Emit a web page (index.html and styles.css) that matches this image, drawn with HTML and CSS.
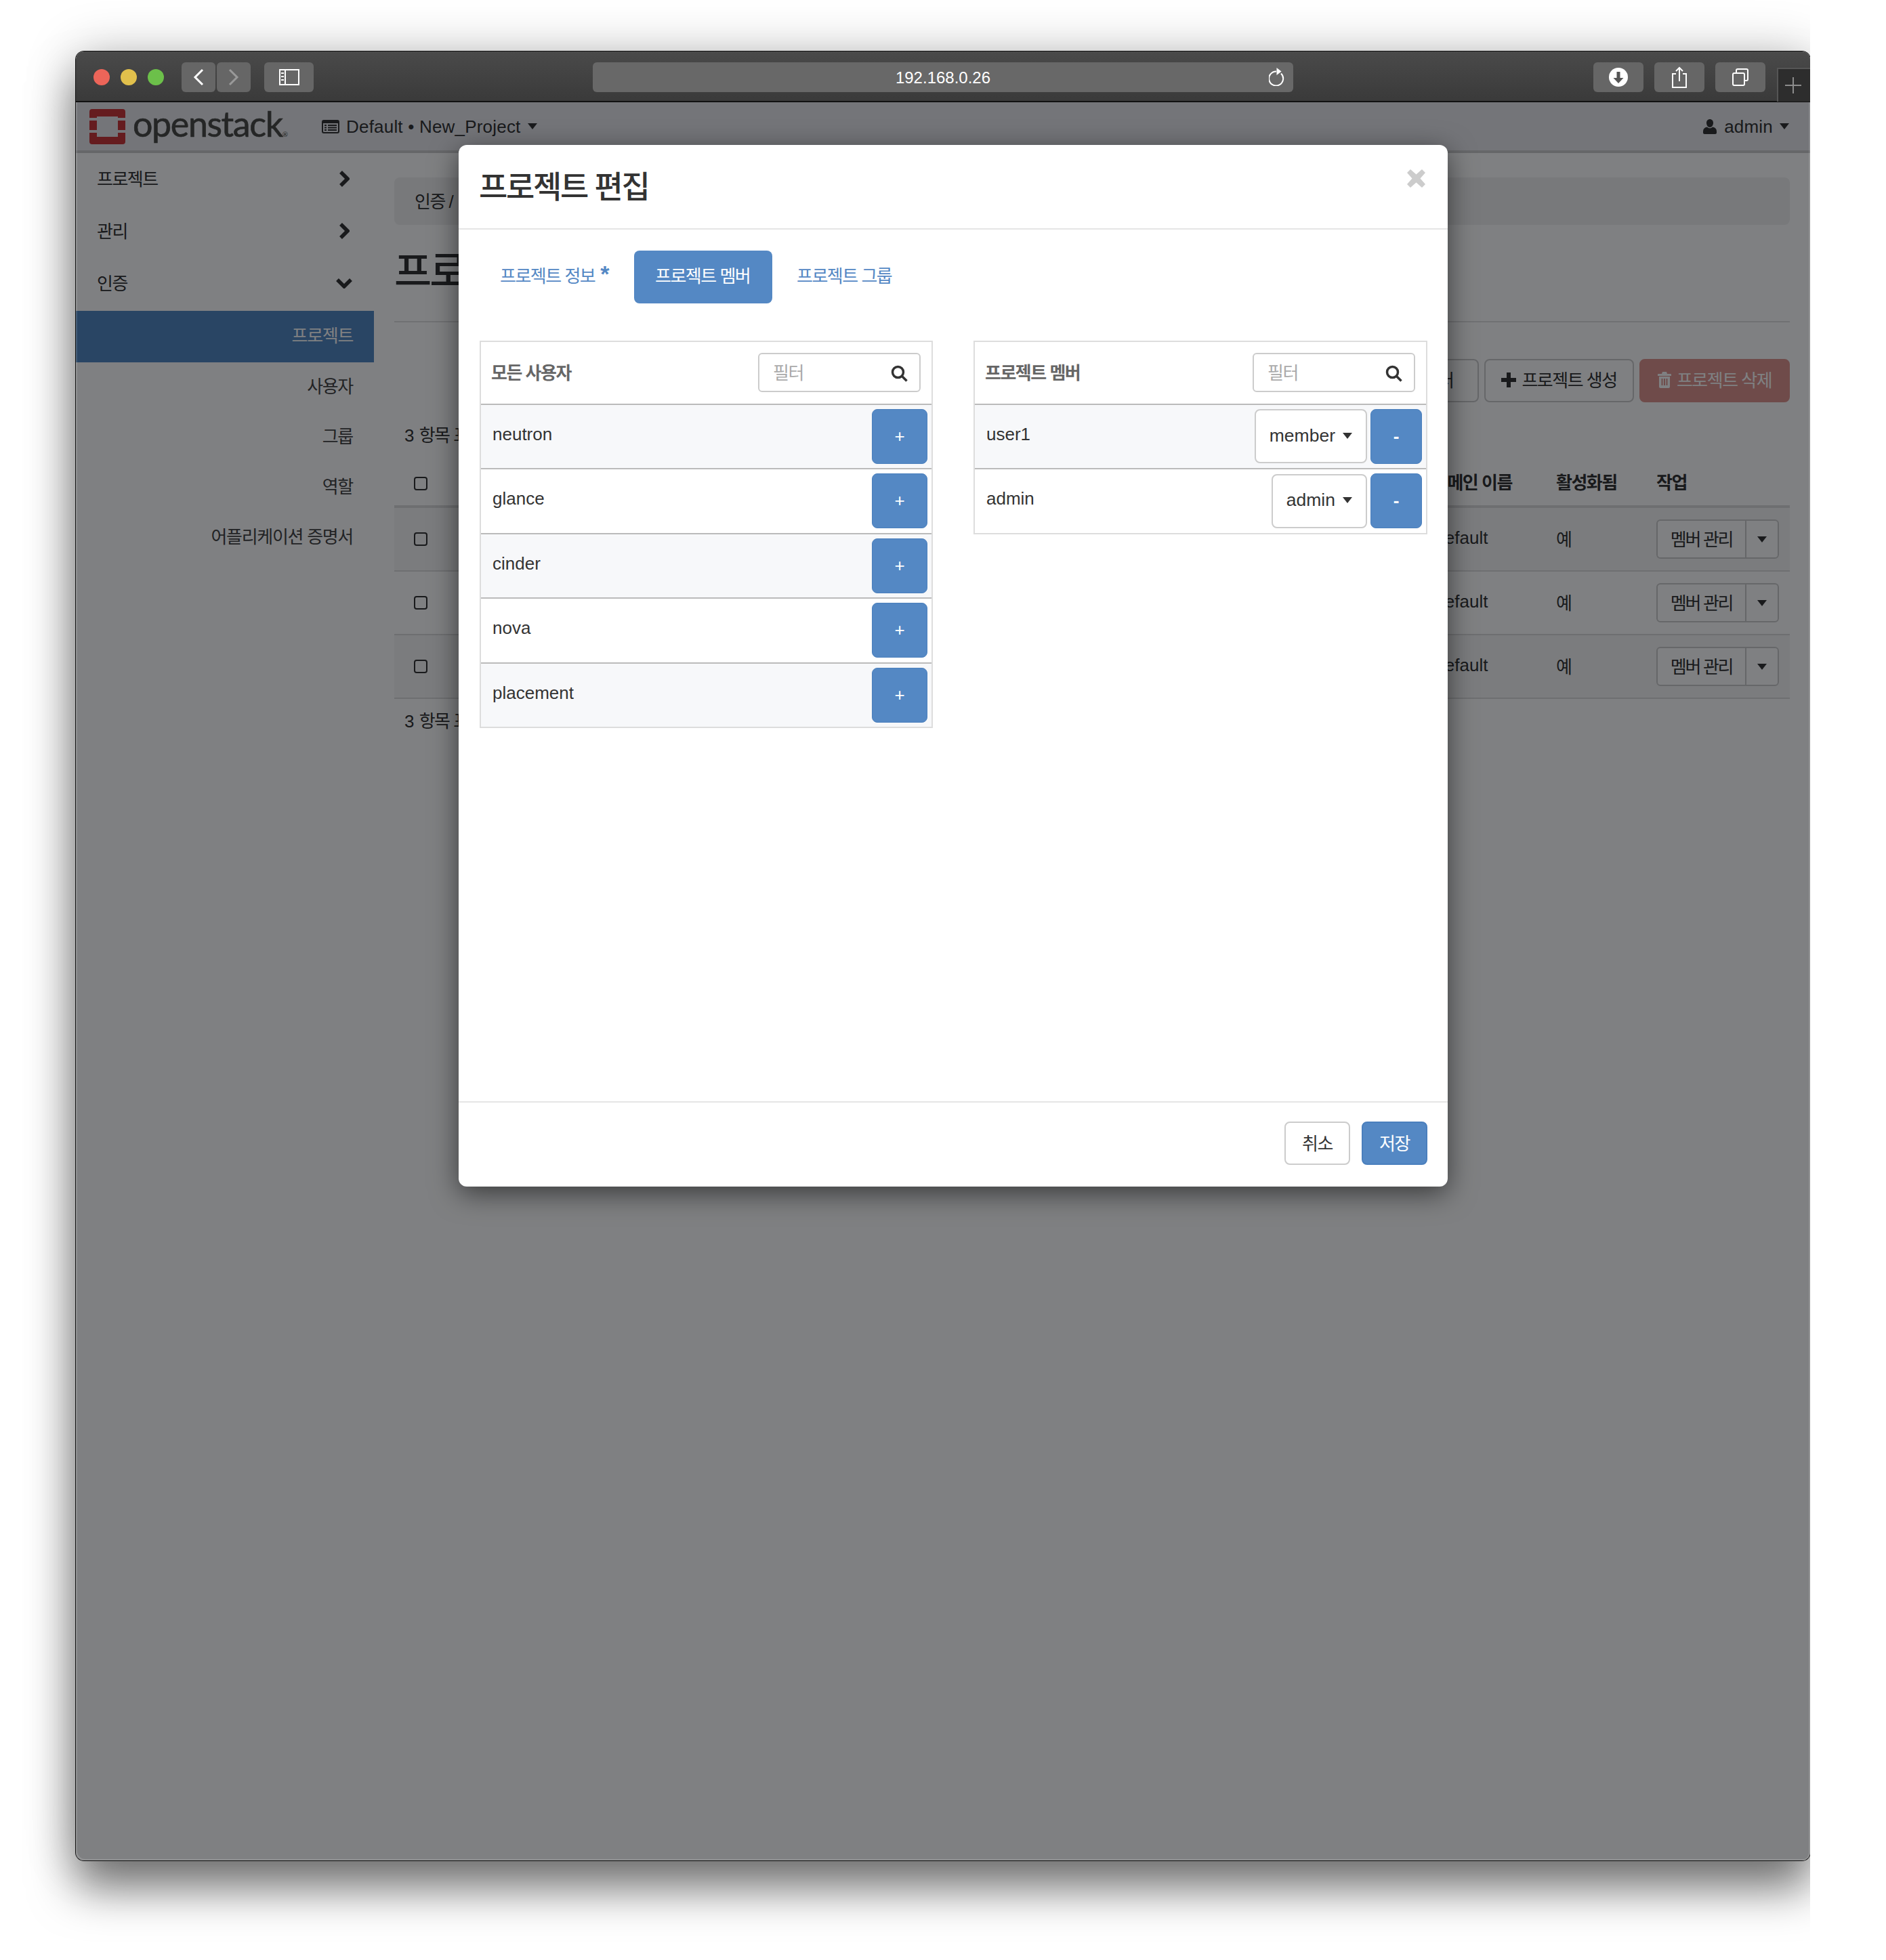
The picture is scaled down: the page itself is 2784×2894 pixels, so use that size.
FILE: index.html
```html
<!DOCTYPE html>
<html lang="ko">
<head>
<meta charset="utf-8">
<title>프로젝트 편집</title>
<link rel="stylesheet" href="styles.css">
</head>
<body>
<div class="stage">
<div class="window">
  <header class="titlebar">
    <div class="lights"><i class="light red"></i><i class="light yellow"></i><i class="light green"></i></div>
    <div class="tb-btn nav-btn first"><svg width="16" height="26" viewBox="0 0 16 26"><path class="st-white" d="M14 2 3 13l11 11"/></svg></div>
    <div class="tb-btn nav-btn second"><svg width="16" height="26" viewBox="0 0 16 26"><path class="st-dim" d="m2 2 11 11L2 24"/></svg></div>
    <div class="tb-btn side-btn"><svg width="30" height="24" viewBox="0 0 30 24"><path class="st-white thin" d="M1 1h28v22H1zM9 1v22"/><path class="st-white thin" d="M3 6h4M3 11h4M3 16h4"/></svg></div>
    <div class="urlbar"><span class="url">192.168.0.26</span><svg class="reload" width="24" height="28" viewBox="0 0 24 28"><path class="st-white thin" d="M18 9.500a10.500 10.500 0 1 1-7-3"/><path class="fill-white" d="M11.500 1l7 5.500-7 5.500z"/></svg></div>
    <div class="tb-btn icon-btn dl"><svg width="28" height="28" viewBox="0 0 28 28"><circle class="fill-white" cx="14" cy="14" r="14"/><path class="fill-dark" d="M11.500 6h5v9h5L14 23l-7.500-8h5z"/></svg></div>
    <div class="tb-btn icon-btn"><svg width="24" height="32" viewBox="0 0 24 32"><path class="st-white thin" d="M7 11H2v20h20V11h-5M12 22V2M7 7l5-5 5 5"/></svg></div>
    <div class="tb-btn icon-btn"><svg width="26" height="26" viewBox="0 0 26 26"><path class="st-white thin" d="M7 6V3a2 2 0 0 1 2-2h13a2 2 0 0 1 2 2v13a2 2 0 0 1-2 2h-2"/><rect class="st-white thin" x="2" y="7" width="17" height="18" rx="2"/></svg></div>
    <div class="newtab"><svg width="24" height="24" viewBox="0 0 24 24"><path class="st-plus" d="M12 0v24M0 12h24"/></svg></div>
  </header>

  <div class="app">
    <nav class="navbar">
      <svg class="logo" width="53" height="52" viewBox="0 0 53 52"><path class="fill-logo" d="M4 0h45a4 4 0 0 1 4 4v9H42v-2H11v2H0V4a4 4 0 0 1 4-4zM0 17h11v14H0zM42 17h11v14H42zM0 35h11v6h31v-6h11v13a4 4 0 0 1-4 4H4a4 4 0 0 1-4-4z"/></svg>
      <span class="brand">openstack<small class="reg">®</small></span>
      <svg class="domain-icon" width="26" height="20" viewBox="0 0 26 20"><path class="fill-text" fill-rule="evenodd" d="M3 0h20a3 3 0 0 1 3 3v14a3 3 0 0 1-3 3H3a3 3 0 0 1-3-3V3a3 3 0 0 1 3-3zM2 5v12a1 1 0 0 0 1 1h20a1 1 0 0 0 1-1V5zM4 7h3v2H4zM9 7h13v2H9zM4 10.500h3v2H4zM9 10.500h13v2H9zM4 14h3v2H4zM9 14h13v2H9z"/></svg>
      <span class="nav-text">Default • New_Project</span><i class="caret nav-caret"></i>
      <div class="nav-user">
        <svg width="22" height="22" viewBox="0 0 22 22"><path class="fill-text" d="M11 0c3 0 5 2.300 5 5.500S14 12 11 12 6 8.700 6 5.500 8 0 11 0zM7 11.500c1 1.200 2.500 1.800 4 1.800s3-.6 4-1.800c4 .7 6 3 6 6.500v2c0 1.200-1 2-2 2H3c-1 0-2-.8-2-2v-2c0-3.500 2-5.800 6-6.500z"/></svg>
        <span class="nav-text">admin</span><i class="caret nav-caret"></i>
      </div>
    </nav>

    <div class="layout">
      <aside class="sidebar">
        <div class="side-item"><span class="ko">프로젝트</span><svg width="16" height="26" viewBox="0 0 16 26"><path class="st-chev" d="m3 3 10 10L3 23"/></svg></div>
        <div class="side-item"><span class="ko">관리</span><svg width="16" height="26" viewBox="0 0 16 26"><path class="st-chev" d="m3 3 10 10L3 23"/></svg></div>
        <div class="side-item open"><span class="ko">인증</span><svg width="24" height="16" viewBox="0 0 24 16"><path class="st-chev" d="m2 3 10 10L22 3"/></svg></div>
        <div class="sub-item active ko">프로젝트</div>
        <div class="sub-item ko">사용자</div>
        <div class="sub-item ko">그룹</div>
        <div class="sub-item ko">역할</div>
        <div class="sub-item ko">어플리케이션 증명서</div>
      </aside>

      <main class="main">
        <div class="breadcrumb ko"><span>인증 /</span><span class="crumb-next">프로젝트</span></div>
        <h1 class="page-title">프로젝트</h1>
        <hr class="rule">
        <div class="actions">
          <div class="btn ko filter-btn"><span>필터</span></div>
          <div class="btn ko create-btn"><svg width="22" height="22" viewBox="0 0 22 22"><path class="fill-text" d="M8 0h6v8h8v6h-8v8H8v-8H0V8h8z"/></svg><span>프로젝트 생성</span></div>
          <div class="btn ko delete-btn"><svg width="20" height="24" viewBox="0 0 20 24"><path class="fill-white" fill-rule="evenodd" d="M7 0h6l1 3h5a1 1 0 0 1 1 1v2H0V4a1 1 0 0 1 1-1h5zM2 7h16v15a2 2 0 0 1-2 2H4a2 2 0 0 1-2-2zM5.500 10v10h2V10zM9 10v10h2V10zM12.500 10v10h2V10z"/></svg><span>프로젝트 삭제</span></div>
        </div>
        <div class="summary"><span>3 </span><span class="ko">항목 표시</span></div>
        <div class="table">
          <div class="t-row t-head">
            <div class="cell"><i class="check head-check"></i></div>
            <div class="cell ko">도메인 이름</div>
            <div class="cell ko">활성화됨</div>
            <div class="cell ko">작업</div>
          </div>
          <div class="t-row striped">
            <div class="cell"><i class="check"></i></div>
            <div class="cell"><span class="cell-text">Default</span></div>
            <div class="cell ko"><span class="cell-text">예</span></div>
            <div class="cell"><div class="split"><span class="split-main ko">멤버 관리</span><span class="split-caret"><i class="caret"></i></span></div></div>
          </div>
          <div class="t-row">
            <div class="cell"><i class="check"></i></div>
            <div class="cell"><span class="cell-text">Default</span></div>
            <div class="cell ko"><span class="cell-text">예</span></div>
            <div class="cell"><div class="split"><span class="split-main ko">멤버 관리</span><span class="split-caret"><i class="caret"></i></span></div></div>
          </div>
          <div class="t-row striped">
            <div class="cell"><i class="check"></i></div>
            <div class="cell"><span class="cell-text">Default</span></div>
            <div class="cell ko"><span class="cell-text">예</span></div>
            <div class="cell"><div class="split"><span class="split-main ko">멤버 관리</span><span class="split-caret"><i class="caret"></i></span></div></div>
          </div>
        </div>
        <div class="summary bottom"><span>3 </span><span class="ko">항목 표시</span></div>
      </main>
    </div>

    <div class="overlay"></div>

    <section class="modal">
      <div class="modal-head">
        <h4 class="modal-title">프로젝트 편집</h4>
        <svg class="close" width="27" height="27" viewBox="0 0 27 27"><path class="fill-close" d="M5 0l8.500 7.500L22 0l5 5-7.500 8.500L27 22l-5 5-8.500-7.500L5 27l-5-5 7.500-8.500L0 5z"/></svg>
      </div>
      <div class="modal-body">
        <div class="tabs">
          <div class="tab tab-info ko">프로젝트 정보<span class="req">*</span></div>
          <div class="tab ko current">프로젝트 멤버</div>
          <div class="tab ko">프로젝트 그룹</div>
        </div>
        <div class="columns">
          <div class="panel">
            <div class="panel-head">
              <span class="panel-title ko">모든 사용자</span>
              <div class="filter"><span class="ko">필터</span><svg width="26" height="25" viewBox="0 0 26 25"><circle class="st-search" cx="10.500" cy="10.500" r="8"/><path class="st-search" d="m16.500 16.500 7 7"/></svg></div>
            </div>
            <div class="row alt"><span>neutron</span><div class="add">+</div></div>
            <div class="row"><span>glance</span><div class="add">+</div></div>
            <div class="row alt"><span>cinder</span><div class="add">+</div></div>
            <div class="row"><span>nova</span><div class="add">+</div></div>
            <div class="row alt"><span>placement</span><div class="add">+</div></div>
          </div>
          <div class="panel">
            <div class="panel-head">
              <span class="panel-title ko">프로젝트 멤버</span>
              <div class="filter"><span class="ko">필터</span><svg width="26" height="25" viewBox="0 0 26 25"><circle class="st-search" cx="10.500" cy="10.500" r="8"/><path class="st-search" d="m16.500 16.500 7 7"/></svg></div>
            </div>
            <div class="row alt"><span>user1</span><div class="select">member<i class="caret"></i></div><div class="remove">-</div></div>
            <div class="row"><span>admin</span><div class="select">admin<i class="caret"></i></div><div class="remove">-</div></div>
          </div>
        </div>
      </div>
      <div class="modal-foot">
        <div class="foot-btn cancel ko">취소</div>
        <div class="foot-btn save ko">저장</div>
      </div>
    </section>
  </div>
</div>
</div>
</body>
</html>
```
FILE: styles.css
```css
* { box-sizing: border-box; }
html, body { margin: 0; background: #fff; }
body {
  font-family: "Liberation Sans", "Noto Sans CJK KR", sans-serif;
  font-size: 26px;
  color: #333;
}
i { display: block; }
.ko { letter-spacing: -1.5px; }

/* free canvas: screenshot with the shadow cut off on the right */
.stage { width: 2672px; height: 2894px; overflow: hidden; padding: 76px 0 0 112px; }
.window {
  position: relative;
  width: 2560px;
  height: 2671px;
  border-radius: 12px;
  box-shadow: 0 0 0 1px #111, 0 42px 66px rgba(0, 0, 0, .5), 0 0 76px rgba(0, 0, 0, .22);
  background: #fff;
}

/* browser chrome */
.titlebar {
  height: 75px;
  display: flex;
  align-items: flex-start;
  padding: 16px 0 0 26px;
  background: linear-gradient(#4a4a4a, #3a3a3a);
  border-radius: 12px 12px 0 0;
  border-bottom: 2px solid #111;
}
.lights { display: flex; gap: 16px; padding-top: 10px; }
.light { width: 24px; height: 24px; border-radius: 50%; }
.red { background: #ec6559; }
.yellow { background: #e1c04c; }
.green { background: #6cc04a; }
.tb-btn {
  height: 44px;
  border-radius: 6px;
  background: #666;
  display: flex;
  align-items: center;
  justify-content: center;
}
.nav-btn { width: 50px; }
.nav-btn.first { margin-left: 26px; }
.nav-btn.second { margin-left: 2px; }
.side-btn { width: 73px; margin-left: 20px; }
.icon-btn { width: 74px; margin-left: 16px; }
.dl { margin-left: 443px; }
.urlbar {
  width: 1034px;
  height: 44px;
  margin-left: 412px;
  position: relative;
  border-radius: 6px;
  background: #686868;
  display: flex;
  align-items: center;
  justify-content: center;
}
.url { color: #fff; font-size: 24px; padding-top: 2px; }
.reload { position: absolute; right: 12px; top: 7px; }
.newtab {
  width: 49px;
  height: 50px;
  margin: 8px 0 0 17px;
  padding-right: 4px;
  background: #2d2d2d;
  border-left: 2px solid #555;
  border-top: 2px solid #555;
  display: flex;
  align-items: center;
  justify-content: center;
}
.st-white, .st-dim, .st-plus, .st-chev, .st-search { fill: none; }
.st-white { stroke: #fff; stroke-width: 3; }
.st-white.thin { stroke-width: 2; }
.st-dim { stroke: #999; stroke-width: 3; }
.st-plus { stroke: #8c8c8c; stroke-width: 2; }
.st-chev { stroke: #333; stroke-width: 5.500; }
.st-search { stroke: #333; stroke-width: 3.500; }
.fill-white { fill: #fff; }
.fill-dark { fill: #555; }
.fill-logo { fill: #ca3639; }
.fill-text { fill: #333; }
.fill-close { fill: #ccc; }

/* application underneath the backdrop */
.app { position: relative; height: 2596px; }
.navbar {
  height: 75px;
  display: flex;
  align-items: center;
  padding-left: 20px;
  background: #e8e9ec;
  border-bottom: 4px solid #ccc;
}
.brand {
  width: 228px;
  margin-left: 11px;
  font-family: Lato, sans-serif;
  font-size: 52px;
  letter-spacing: -1.400px;
  line-height: 60px;
  white-space: nowrap;
  color: #4a4a46;
  -webkit-text-stroke: .6px #4a4a46;
  position: relative;
  top: 3px;
}
.reg { font-size: 10px; letter-spacing: 0; -webkit-text-stroke: 0; }
.domain-icon { margin-left: 51px; }
.nav-text { margin: 2px 0 0 10px; color: #333; letter-spacing: .2px; }
.caret {
  width: 0;
  height: 0;
  border-left: 7.500px solid transparent;
  border-right: 7.500px solid transparent;
  border-top: 9px solid #333;
}
.nav-caret { margin-left: 10px; }
.nav-user { margin-left: auto; padding-right: 31px; display: flex; align-items: center; }

.layout { display: flex; }
.sidebar { width: 440px; flex: none; padding-top: 1px; }
.side-item {
  height: 77.300px;
  padding: 0 36px 4px 31px;
  display: flex;
  align-items: center;
  justify-content: space-between;
}
.side-item span { margin-top: -3px; }
.side-item.open { padding-right: 32px; }
.sub-item {
  height: 74px;
  padding: 0 31px 6px 0;
  display: flex;
  align-items: center;
  justify-content: flex-end;
  color: #444;
  letter-spacing: -1.3px;
}
.sub-item.active { height: 76px; background: #5288c2; color: #fff; }

.main { flex: 1; padding: 36px 30px 0 30px; }
.breadcrumb {
  height: 70px;
  padding: 0 30px 4px;
  display: flex;
  align-items: center;
  background: #f0f0f0;
  border-radius: 8px;
}
.crumb-next { margin-left: 20px; }
.page-title {
  margin: 30px 0 0;
  font-size: 60px;
  line-height: 80px;
  font-weight: 500;
  letter-spacing: -3px;
  color: #333;
}
.rule { height: 2px; margin: 32px 0 0; border: 0; background: #e0e0e0; }
.actions { display: flex; justify-content: flex-end; gap: 8px; margin-top: 54px; }
.btn {
  height: 64px;
  width: 222px;
  display: flex;
  align-items: center;
  justify-content: center;
  gap: 8px;
  border: 2px solid #ccc;
  border-radius: 8px;
  background: #fff;
}
.btn span { margin-top: -6px; }
.btn svg { margin-top: -2px; }
.filter-btn { width: 120px; }
.create-btn { width: 221px; }
.delete-btn { background: #de948e; border-color: #de948e; color: #fff; }
.summary { height: 38px; margin-top: 30px; padding-left: 15px; line-height: 38px; }
.summary.bottom { margin-top: 14px; }

.table { margin-top: 18px; }
.t-row {
  display: grid;
  grid-template-columns: 1fr 183px 148px 197px;
  height: 94px;
  border-bottom: 2px solid #ddd;
}
.t-head { height: 70px; border-bottom: 4px solid #ddd; font-weight: 700; padding-bottom: 5px; }
.striped { background: #f7f7f7; }
.cell { display: flex; align-items: center; }
.cell:first-child { padding-left: 29px; }
.cell-text { margin-top: -3px; }
.check { width: 20px; height: 20px; border: 2px solid #333; border-radius: 4px; }
.head-check { margin-top: 6px; }
.split {
  width: 181px;
  height: 58px;
  display: flex;
  border: 2px solid #ccc;
  border-radius: 6px;
  background: #fff;
}
.split-main { flex: 1; display: flex; align-items: center; justify-content: center; padding-bottom: 4px; letter-spacing: -2.300px; }
.split-caret {
  width: 48px;
  display: flex;
  align-items: center;
  justify-content: center;
  border-left: 2px solid #ccc;
}

.overlay {
  position: absolute;
  inset: 0;
  background: rgba(0, 2, 6, .5);
  border-radius: 0 0 12px 12px;
  box-shadow: inset 2px -2px 0 rgba(255, 255, 255, .14), inset -2px 0 0 rgba(255, 255, 255, .14);
}

/* modal */
.modal {
  position: absolute;
  left: 565px;
  top: 63px;
  width: 1460px;
  height: 1538px;
  display: flex;
  flex-direction: column;
  background: #fff;
  border-radius: 12px;
  box-shadow: 0 10px 40px rgba(0, 0, 0, .55);
}
.modal-head {
  height: 125px;
  flex: none;
  padding: 0 33px 0 30px;
  border-bottom: 2px solid #e5e5e5;
  display: flex;
  justify-content: space-between;
  align-items: flex-start;
}
.modal-title {
  margin: 33px 0 0;
  font-size: 46px;
  line-height: 58px;
  font-weight: 500;
  letter-spacing: -2.300px;
  color: #333;
}
.close { margin-top: 36px; }
.modal-body { flex: 1; padding: 31px 30px 0 31px; }
.tabs { display: flex; gap: 4px; height: 78px; }
.tab {
  height: 78px;
  padding: 0 32px 7px;
  display: flex;
  align-items: center;
  border-radius: 8px;
  color: #5488c4;
  white-space: nowrap;
}
.tab-info { width: 224px; padding-left: 30px; padding-right: 0; }
.tab.current { background: #5488c4; color: #fff; width: 204px; padding-left: 31px; }
.req { align-self: flex-start; margin: 17px 0 0 8px; font-size: 34px; font-weight: 700; line-height: 34px; }
.columns { display: grid; grid-template-columns: 669px 1fr; gap: 60px; margin-top: 55px; align-items: start; }
.panel { border: 2px solid #ddd; }
.panel-head {
  height: 90.500px;
  display: flex;
  align-items: center;
  justify-content: space-between;
  padding: 0 16px 0 15px;
}
.panel-title { font-weight: 700; color: #666; padding-bottom: 3px; }
.filter {
  width: 240px;
  height: 58px;
  padding: 0 16px 4px 20px;
  display: flex;
  align-items: center;
  justify-content: space-between;
  border: 2px solid #ccc;
  border-radius: 6px;
  color: #aaa;
}
.filter svg { margin-top: 6px; }
.row {
  height: 95.500px;
  padding: 0 6px 4px 17px;
  display: flex;
  align-items: center;
  gap: 5px;
  border-top: 2px solid #bbb;
}
.row span { margin: -2px auto 0 0; }
.alt { background: #f7f8fa; }
.add, .remove {
  height: 81px;
  margin-top: 4px;
  display: flex;
  align-items: center;
  justify-content: center;
  border-radius: 8px;
  background: #5488c4;
  color: #fff;
  border: 1px solid #4a7fbd;
}
.add { width: 82px; }
.remove { width: 76px; font-weight: 700; }
.select {
  height: 80px;
  margin-top: 4px;
  padding: 0 20px;
  display: flex;
  align-items: center;
  gap: 11px;
  border: 2px solid #ccc;
  border-radius: 8px;
  background: #fff;
  padding-bottom: 2px;
  font-size: 26.500px;
}
.modal-foot {
  height: 126px;
  flex: none;
  padding: 28px 30px 0 0;
  display: flex;
  justify-content: flex-end;
  gap: 17px;
  border-top: 2px solid #e5e5e5;
}
.foot-btn {
  width: 97px;
  height: 64px;
  display: flex;
  align-items: center;
  justify-content: center;
  border-radius: 8px;
  border: 2px solid #ccc;
  padding-bottom: 4px;
}
.save { background: #5488c4; border-color: #4a7fbd; color: #fff; }
```
